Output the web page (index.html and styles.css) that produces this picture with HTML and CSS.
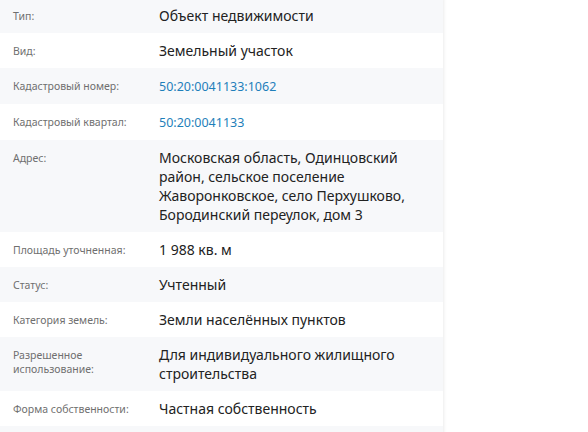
FILE: index.html
```html
<!DOCTYPE html>
<html lang="ru">
<head>
<meta charset="utf-8">
<link rel="stylesheet" href="styles.css">
</head>
<body>
<div class="panel">
  <div class="row alt"><div class="label">Тип:</div><div class="value">Объект недвижимости</div></div>
  <div class="row"><div class="label">Вид:</div><div class="value">Земельный участок</div></div>
  <div class="row alt"><div class="label">Кадастровый номер:</div><div class="value"><a class="link">50:20:0041133:1062</a></div></div>
  <div class="row"><div class="label">Кадастровый квартал:</div><div class="value"><a class="link">50:20:0041133</a></div></div>
  <div class="row alt"><div class="label">Адрес:</div><div class="value">Московская область, Одинцовский район, сельское поселение Жаворонковское, село Перхушково, Бородинский переулок, дом 3</div></div>
  <div class="row"><div class="label">Площадь уточненная:</div><div class="value">1 988 кв. м</div></div>
  <div class="row alt"><div class="label">Статус:</div><div class="value">Учтенный</div></div>
  <div class="row"><div class="label">Категория земель:</div><div class="value">Земли населённых пунктов</div></div>
  <div class="row alt"><div class="label">Разрешенное использование:</div><div class="value">Для индивидуального жилищного строительства</div></div>
  <div class="row"><div class="label">Форма собственности:</div><div class="value">Частная собственность</div></div>
  <div class="row alt"><div class="label">&nbsp;</div><div class="value">&nbsp;</div></div>
</div>
</body>
</html>
```
FILE: styles.css
```css
html, body {
  margin: 0;
  padding: 0;
  background: #fff;
}
body {
  font-family: "Noto Sans", "Open Sans", sans-serif;
  overflow: hidden;
}
.panel {
  width: 443px;
  margin-top: -2px;
  box-shadow: 1px 0 3px rgba(0, 0, 0, 0.08);
  background: #fff;
}
.row {
  display: flex;
  padding: 8px 0;
}
.row.alt {
  background: #f7f8fa;
}
.label {
  width: 159px;
  padding-left: 13px;
  box-sizing: border-box;
  flex: none;
  font-size: 10.5px;
  line-height: 14px;
  color: #6f6f6f;
  padding-top: 3px;
  padding-right: 10px;
}
.value {
  flex: 1;
  font-size: 14px;
  line-height: 19px;
  color: #222;
  padding-right: 28px;
}
.link {
  color: #1f7fba;
  text-decoration: none;
  font-size: 12.5px;
}
```
